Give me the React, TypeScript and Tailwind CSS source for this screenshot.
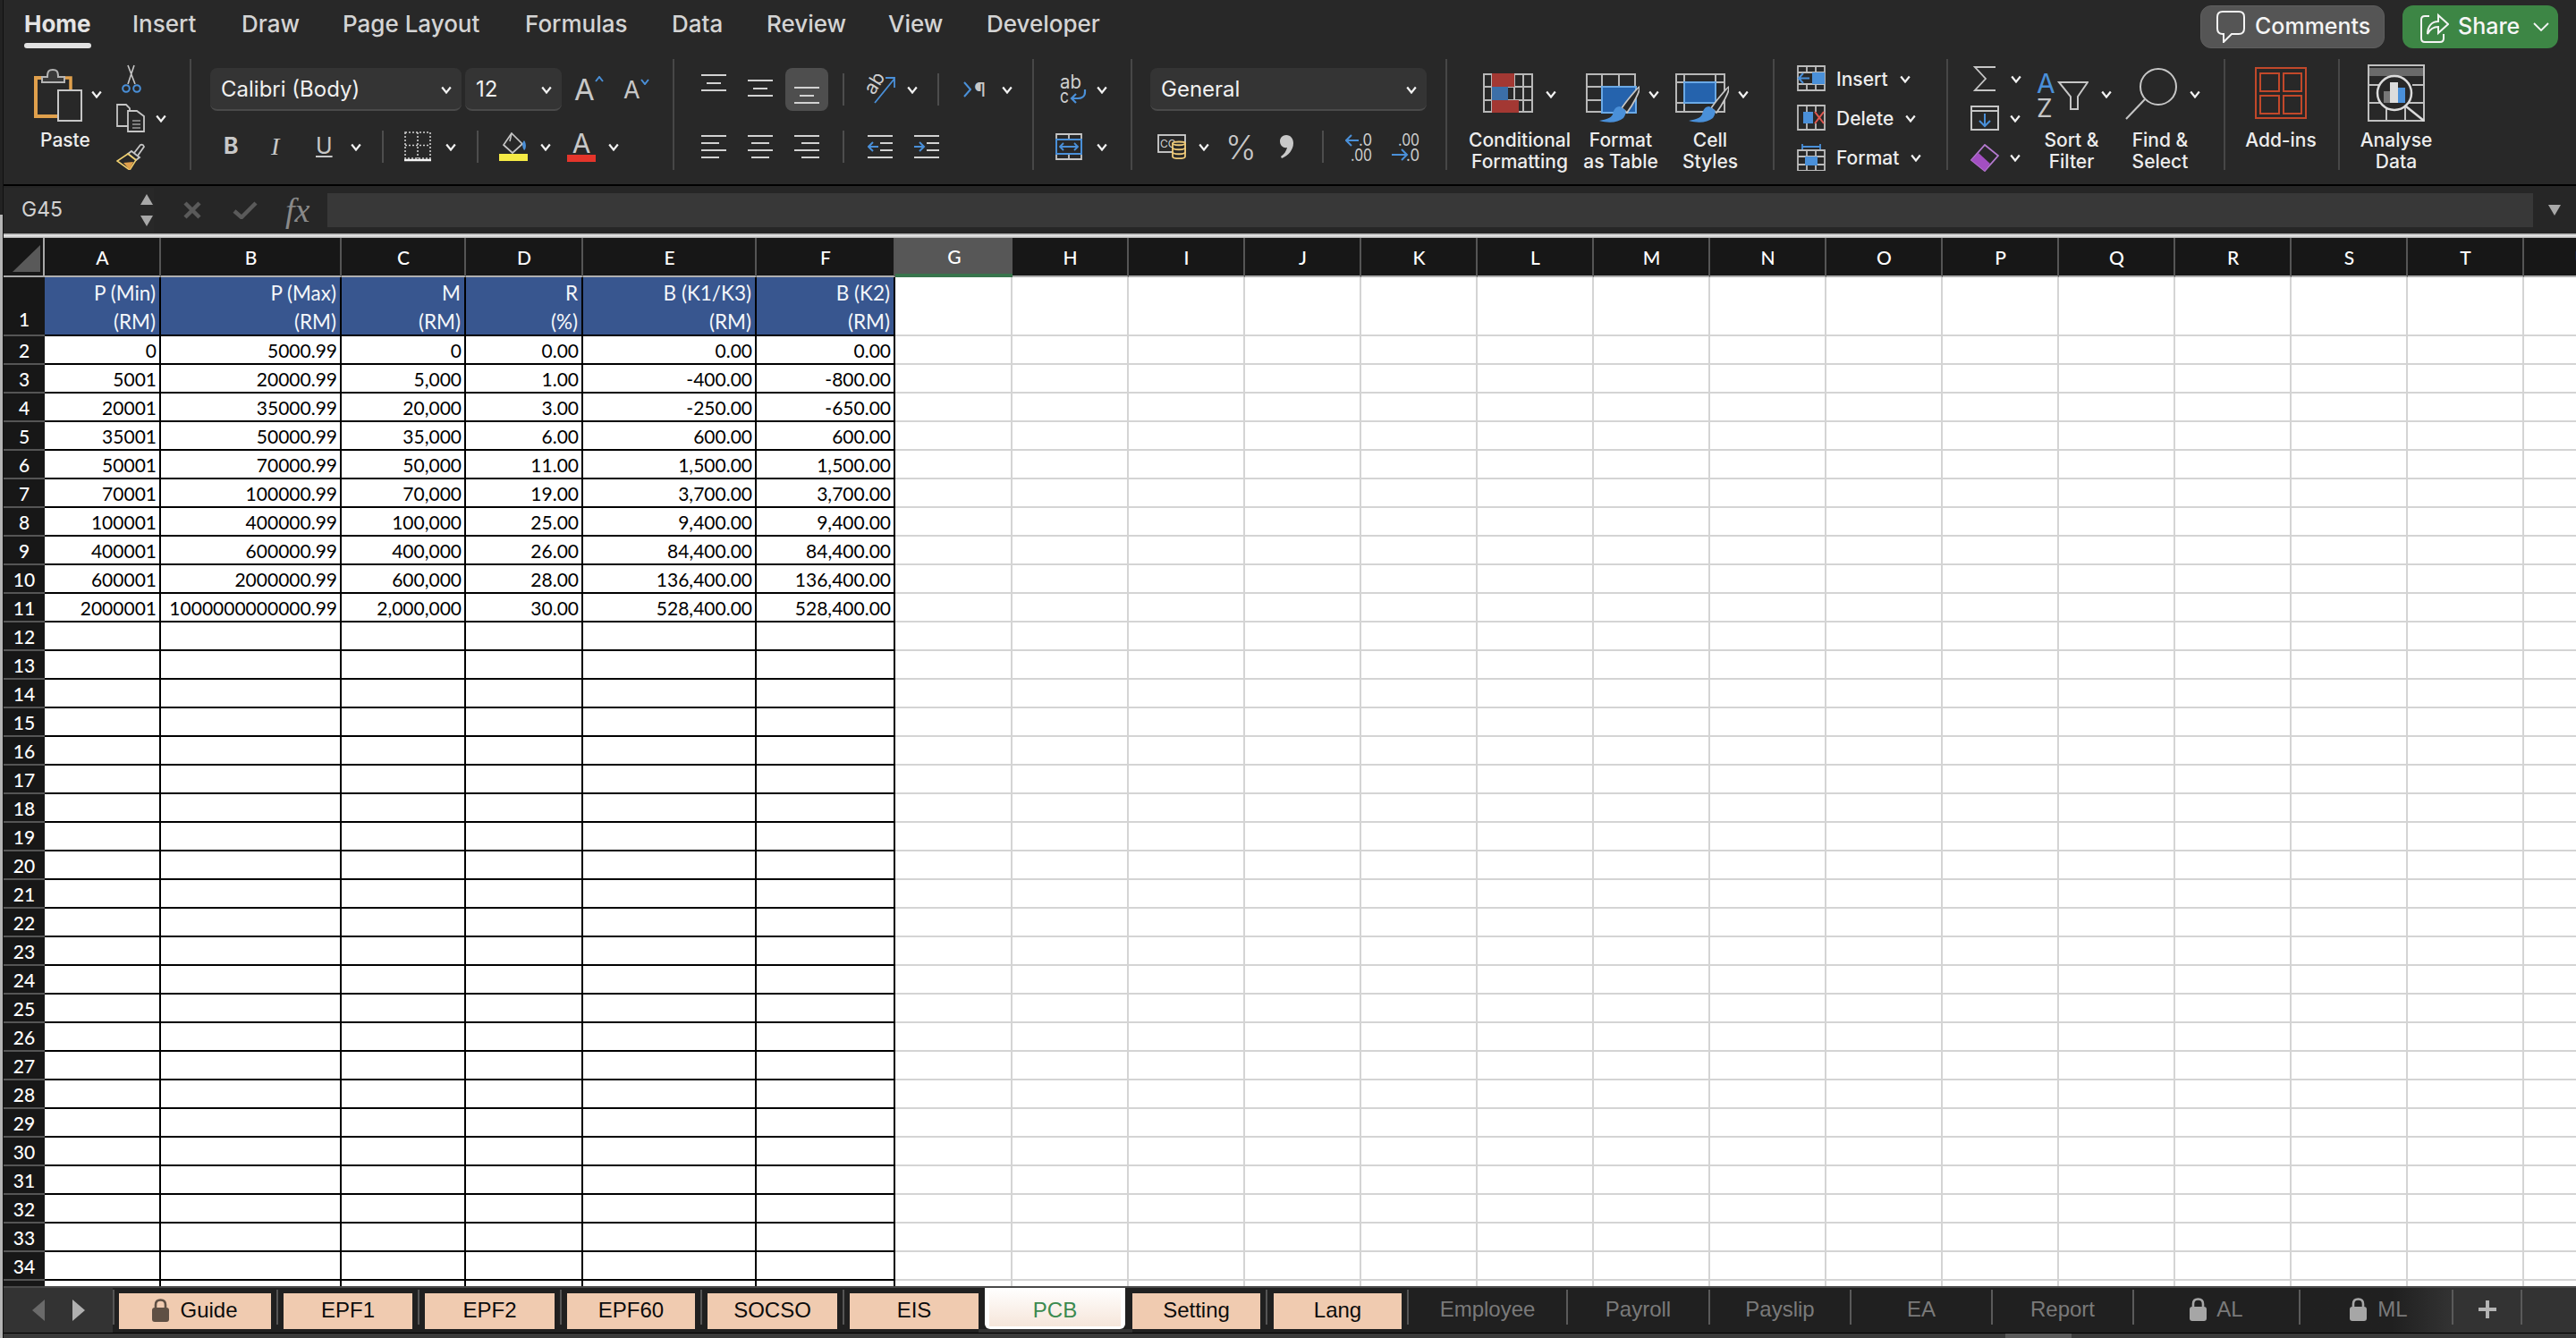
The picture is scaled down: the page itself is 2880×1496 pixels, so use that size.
import React from "react";

const G = "#c6c6c6";
const B = "#4a90d9";

function Chev({ cls = "" }: { cls?: string }) {
  return (
    <svg width="12" height="9" viewBox="0 0 12 9" className={`shrink-0 ${cls}`}>
      <path d="M1.2 1.5 6 7.5 10.8 1.5" fill="none" stroke="#f2f2f2" strokeWidth="2.2" />
    </svg>
  );
}

function Sep({ cls = "" }: { cls?: string }) {
  return <div className={`h-[36px] w-[2px] shrink-0 bg-[#4d4d4d] ${cls}`} />;
}

function ClipboardIcon() {
  return (
    <svg width="54" height="59" viewBox="0 0 54 59" className="shrink-0">
      <path d="M10 10H2V53H26" fill="none" stroke="#e0a04c" strokeWidth="4" />
      <path d="M34 10H41V24" fill="none" stroke="#e0a04c" strokeWidth="3.5" />
      <path d="M9 15V9H15C15 2 17 1 21 1S27 2 27 9H34V15Z" fill="#3a3a3a" stroke="#b4b4b4" strokeWidth="2" />
      <rect x="27" y="24" width="26" height="34" fill="#282828" stroke={G} strokeWidth="2" />
    </svg>
  );
}

function ScissorsIcon() {
  return (
    <svg width="22" height="33" viewBox="0 0 22 33" className="ml-[6px] mt-[6px] block">
      <path d="M14 1 7 22M7 1 15 22" stroke={G} strokeWidth="1.6" fill="none" />
      <circle cx="5" cy="27" r="3.8" fill="none" stroke={B} strokeWidth="2" />
      <circle cx="17" cy="27" r="3.8" fill="none" stroke={B} strokeWidth="2" />
    </svg>
  );
}

function CopyIcon() {
  return (
    <svg width="32" height="32" viewBox="0 0 32 32" className="shrink-0">
      <path d="M13 25H1V1H11L15 5V8" fill="none" stroke={G} strokeWidth="1.8" />
      <path d="M13 8H23L31 14V31H13Z" fill="#282828" stroke={G} strokeWidth="1.8" />
      <path d="M18 19H27M18 23H27M18 27H27" stroke="#9a9a9a" strokeWidth="1.5" />
    </svg>
  );
}

function PainterIcon() {
  return (
    <svg width="32" height="30" viewBox="0 0 32 30" className="block">
      <path d="M20 11 27 2Q30 1 31 4L24 14" fill="none" stroke={G} strokeWidth="1.8" />
      <path d="M17 9 26 16 22 19 13 12Z" fill="#282828" stroke={G} strokeWidth="1.8" />
      <path d="M13 12 22 19 15 30 1 20Z" fill="#282828" stroke="#f0d070" strokeWidth="1.6" />
      <path d="M8 22 19 21 15 30Z" fill="#e0a04c" />
    </svg>
  );
}

function BordersIcon() {
  return (
    <svg width="30" height="34" viewBox="0 0 30 34" className="shrink-0">
      <path d="M1 1H29V30H1ZM15 1V30M1 15.5H29" fill="none" stroke="#cfcfcf" strokeWidth="1.6" strokeDasharray="2 2" />
      <path d="M0 32H30" stroke="#f4f4f4" strokeWidth="2.5" />
    </svg>
  );
}

function FillIcon() {
  return (
    <svg width="32" height="32" viewBox="0 0 32 32" className="shrink-0">
      <path d="M14 1 26 13 15 23 5 14Z" fill="none" stroke={G} strokeWidth="1.7" />
      <path d="M14 1 12 10" stroke={G} strokeWidth="1.5" />
      <path d="M28 9C31 13 30 19 28 20 26 17 25 12 28 9Z" fill={B} />
      <rect x="0" y="24" width="32" height="8" fill="#f5ea45" />
    </svg>
  );
}

function AlignV({ pos }: { pos: "top" | "mid" | "bot" }) {
  const y = pos === "top" ? [8, 17, 25] : pos === "mid" ? [14, 23, 31] : [22, 31, 39];
  return (
    <svg width="28" height="48" viewBox="0 0 28 48" className="block shrink-0">
      <path d={`M0 ${y[0]}H28M6 ${y[1]}H22M0 ${y[2]}H28`} stroke="#d2d2d2" strokeWidth="2" />
    </svg>
  );
}

function AlignH({ pos }: { pos: "l" | "c" | "r" }) {
  const d =
    pos === "l"
      ? "M0 6H28M0 14H20M0 22H28M0 30H20"
      : pos === "c"
        ? "M0 6H28M4 14H24M0 22H28M4 30H24"
        : "M0 6H28M8 14H28M0 22H28M8 30H28";
  return (
    <svg width="28" height="36" viewBox="0 0 28 36" className="block shrink-0">
      <path d={d} stroke="#d2d2d2" strokeWidth="2" />
    </svg>
  );
}

function IndentIcon({ inward }: { inward: boolean }) {
  return (
    <svg width="28" height="36" viewBox="0 0 28 36" className="block shrink-0">
      <path d="M0 6H28M14 14H28M14 22H28M0 30H28" stroke="#d2d2d2" strokeWidth="2" />
      {inward ? (
        <path d="M0 18H11M6 13 11 18 6 23" fill="none" stroke={B} strokeWidth="2" />
      ) : (
        <path d="M1 18H12M6 13 1 18 6 23" fill="none" stroke={B} strokeWidth="2" />
      )}
    </svg>
  );
}

function OrientIcon() {
  return (
    <svg width="34" height="34" viewBox="0 0 34 34" className="shrink-0">
      <text transform="translate(10 24) rotate(-58)" fontFamily="Inter, sans-serif" fontSize="21" fill="#cfcfcf">
        ab
      </text>
      <path d="M11 32 33 5M23 4H33V15" fill="none" stroke={B} strokeWidth="1.8" />
    </svg>
  );
}

function WrapIcon() {
  return (
    <svg width="30" height="34" viewBox="0 0 30 34" className="shrink-0">
      <text x="0" y="16" fontFamily="Inter, sans-serif" fontSize="21" fill="#cfcfcf" textLength="24" lengthAdjust="spacingAndGlyphs">
        ab
      </text>
      <text x="0" y="32" fontFamily="Inter, sans-serif" fontSize="21" fill="#cfcfcf" textLength="10" lengthAdjust="spacingAndGlyphs">
        c
      </text>
      <path d="M28 17V20C28 25 24 27 20 27H13M18 22 13 27 18 32" fill="none" stroke={B} strokeWidth="2.2" />
    </svg>
  );
}

function MergeIcon() {
  return (
    <svg width="30" height="30" viewBox="0 0 30 30" className="shrink-0">
      <path d="M1 1H29V29H1ZM15 1V7M15 23V29" fill="none" stroke={G} strokeWidth="1.8" />
      <rect x="1" y="7" width="28" height="16" fill="none" stroke={B} strokeWidth="2" />
      <path d="M5 15H25M9 11 5 15 9 19M21 11 25 15 21 19" fill="none" stroke={B} strokeWidth="1.8" />
    </svg>
  );
}

function CurrencyIcon() {
  return (
    <svg width="32" height="28" viewBox="0 0 32 28" className="shrink-0">
      <rect x="1" y="1" width="30" height="19" fill="none" stroke="#d0d0d0" strokeWidth="1.8" />
      <text x="3" y="15" fontFamily="Inter, sans-serif" fontSize="12" fill="#d0d0d0">
        CC
      </text>
      <path d="M17 10C17 8 31 8 31 10V25C31 28 17 28 17 25Z" fill="#282828" stroke="#eec978" strokeWidth="1.8" />
      <path d="M17 10C17 13 31 13 31 10M17 15C17 18 31 18 31 15M17 20C17 23 31 23 31 20" fill="none" stroke="#eec978" strokeWidth="1.8" />
    </svg>
  );
}

function CommaIcon() {
  return (
    <svg width="15" height="26" viewBox="0 0 15 26" className="shrink-0">
      <path d="M7 0C12 0 15 4 15 9 15 17 9 23 2 26L1 24C5 21 7 18 8 14 3 15 0 11 0 7 0 3 3 0 7 0Z" fill="#c8c8c8" />
    </svg>
  );
}

function DecimalInc() {
  return (
    <svg width="32" height="34" viewBox="0 0 32 34" className="shrink-0">
      <text x="15" y="16" fontFamily="Inter, sans-serif" fontSize="18" fill="#cfcfcf" textLength="15" lengthAdjust="spacingAndGlyphs">
        .0
      </text>
      <text x="6" y="33" fontFamily="Inter, sans-serif" fontSize="18" fill="#cfcfcf" textLength="24" lengthAdjust="spacingAndGlyphs">
        .00
      </text>
      <path d="M15 10H1M7 4 1 10 7 16" fill="none" stroke={B} strokeWidth="2" />
    </svg>
  );
}

function DecimalDec() {
  return (
    <svg width="32" height="34" viewBox="0 0 32 34" className="shrink-0">
      <text x="7" y="16" fontFamily="Inter, sans-serif" fontSize="18" fill="#cfcfcf" textLength="24" lengthAdjust="spacingAndGlyphs">
        .00
      </text>
      <text x="16" y="33" fontFamily="Inter, sans-serif" fontSize="18" fill="#cfcfcf" textLength="15" lengthAdjust="spacingAndGlyphs">
        .0
      </text>
      <path d="M0 26H17M11 20 17 26 11 32" fill="none" stroke={B} strokeWidth="2" />
    </svg>
  );
}

function Brush() {
  return (
    <g>
      <path d="M60 15C58 16 46 30 40 39L46 44C52 36 61 20 60 15Z" fill="#282828" stroke={G} strokeWidth="1.8" />
      <path d="M38 37C33 37 31 41 30 46 28 50 24 51 15 53 26 56 36 55 42 50 45 46 45 42 44 41Z" fill={B} />
    </g>
  );
}

function CondIcon() {
  return (
    <svg width="56" height="44" viewBox="0 0 56 44" className="shrink-0">
      <path d="M1 1H55V43H1ZM10 1V43M35 1V43M45 1V43M1 15H55M1 30H55" fill="none" stroke="#b8b8b8" strokeWidth="2" />
      <rect x="10" y="0" width="25" height="15" fill="#a33833" />
      <rect x="10" y="15" width="18" height="15" fill="#3c6fa8" />
      <rect x="10" y="30" width="30" height="14" fill="#a33833" />
    </svg>
  );
}

function TableIcon() {
  return (
    <svg width="60" height="56" viewBox="0 0 60 56" className="shrink-0">
      <path d="M1 1H55V43H1ZM18 1V43M37 1V43M1 15H55M1 30H55" fill="none" stroke="#b8b8b8" strokeWidth="2" />
      <rect x="18" y="15" width="38" height="29" fill="#2563ad" stroke="#6aa9e6" strokeWidth="2" />
      <Brush />
    </svg>
  );
}

function StylesIcon() {
  return (
    <svg width="60" height="56" viewBox="0 0 60 56" className="shrink-0">
      <path d="M1 1H55V43H1ZM10 1V43M45 1V43M1 10H55M1 33H55" fill="none" stroke="#b8b8b8" strokeWidth="2" />
      <rect x="10" y="10" width="35" height="23" fill="#2563ad" stroke="#6aa9e6" strokeWidth="2" />
      <Brush />
    </svg>
  );
}

function CellOpIcon({ kind }: { kind: "ins" | "del" | "fmt" }) {
  return (
    <svg width="32" height="30" viewBox="0 0 32 30" className="shrink-0">
      {kind === "ins" && (
        <>
          <path d="M1 1H31V28H1ZM11 1V8M21 1V8M11 21V28M21 21V28M1 8H31M1 21H31" fill="none" stroke="#bcbcbc" strokeWidth="1.8" />
          <rect x="17" y="8" width="14" height="13" fill={B} />
          <path d="M14 14.5H2M7 9 2 14.5 7 20" fill="none" stroke={B} strokeWidth="2" />
        </>
      )}
      {kind === "del" && (
        <>
          <path d="M1 1H31V28H1ZM11 1V8M21 1V8M11 21V28M21 21V28M1 1H10M1 28H10" fill="none" stroke="#bcbcbc" strokeWidth="1.8" />
          <rect x="7" y="8" width="11" height="13" fill={B} />
          <path d="M20 8 30 21M30 8 20 21" stroke="#e0574f" strokeWidth="2" />
        </>
      )}
      {kind === "fmt" && (
        <>
          <path d="M1 7H31V30H1ZM11 7V30M21 7V30M1 14H31M1 23H31" fill="none" stroke="#bcbcbc" strokeWidth="1.8" />
          <rect x="9" y="14" width="14" height="10" fill={B} />
          <path d="M6 3H26M6 0V6M26 0V6" fill="none" stroke={B} strokeWidth="1.8" />
        </>
      )}
    </svg>
  );
}

function SigmaIcon() {
  return (
    <svg width="26" height="28" viewBox="0 0 26 28" className="shrink-0">
      <path d="M25 1H2L14 14 2 27H25" fill="none" stroke={G} strokeWidth="1.8" />
    </svg>
  );
}

function FillDownIcon() {
  return (
    <svg width="32" height="28" viewBox="0 0 32 28" className="shrink-0">
      <path d="M1 1H31V27H1ZM1 6H31" fill="none" stroke={G} strokeWidth="2" />
      <path d="M16 9V23M10 17 16 23 22 17" fill="none" stroke={B} strokeWidth="2" />
    </svg>
  );
}

function EraserIcon() {
  return (
    <svg width="32" height="31" viewBox="0 0 32 31" className="shrink-0">
      <path d="M16 1 31 13 16 30 1 18Z" fill="#282828" stroke="#b57ad0" strokeWidth="1.8" />
      <path d="M1 18 9 10 22 22 16 30Z" fill="#a34fc2" />
    </svg>
  );
}

function SortIcon() {
  return (
    <svg width="58" height="54" viewBox="0 0 58 54" className="shrink-0">
      <text x="0" y="26" fontFamily="Inter, sans-serif" fontSize="30" fill={B}>
        A
      </text>
      <text x="0" y="53" fontFamily="Inter, sans-serif" fontSize="28" fill={G}>
        Z
      </text>
      <path d="M25 14H57L46 30V44H38V30Z" fill="none" stroke={G} strokeWidth="2" />
    </svg>
  );
}

function FindIcon() {
  return (
    <svg width="58" height="58" viewBox="0 0 58 58" className="shrink-0">
      <circle cx="37" cy="21" r="20" fill="none" stroke={G} strokeWidth="2" />
      <path d="M22 35 1 57" stroke={G} strokeWidth="2" />
    </svg>
  );
}

function AddinsIcon() {
  return (
    <svg width="58" height="58" viewBox="0 0 58 58" className="shrink-0">
      <rect x="1" y="1" width="56" height="56" fill="none" stroke="#c2482a" strokeWidth="2" />
      <path d="M6 7H27V27H6ZM32 7H52V27H32ZM6 32H27V52H6ZM32 32H52V52H32Z" fill="none" stroke="#c2482a" strokeWidth="2" />
    </svg>
  );
}

function AnalyseIcon() {
  return (
    <svg width="64" height="64" viewBox="0 0 64 64" className="shrink-0">
      <path d="M1 1H63V63H1ZM1 43H63M21 43V63M42 43V63M1 23H14M50 23H63" fill="none" stroke="#c0c0c0" strokeWidth="2" />
      <rect x="2" y="4" width="60" height="9" fill="#6a6a6a" />
      <circle cx="30" cy="32" r="19" fill="#282828" stroke="#dcdcdc" strokeWidth="2.5" />
      <rect x="18" y="30" width="7" height="13" fill="#777" />
      <rect x="25" y="20" width="9" height="23" fill="#dcdcdc" />
      <rect x="34" y="26" width="8" height="17" fill={B} />
      <path d="M43 47 63 63" stroke="#dcdcdc" strokeWidth="2.5" />
    </svg>
  );
}

function CommentIcon() {
  return (
    <svg width="32" height="36" viewBox="0 0 32 36" className="shrink-0">
      <path d="M7 1H25Q31 1 31 7V20Q31 26 25 26H17L8 35V26H7Q1 26 1 20V7Q1 1 7 1Z" fill="none" stroke="#f4f4f4" strokeWidth="2" />
    </svg>
  );
}

function ShareIcon() {
  return (
    <svg width="32" height="36" viewBox="0 0 32 36" className="shrink-0">
      <path d="M10 6H5Q1 6 1 10V31Q1 35 5 35H22Q26 35 26 31V26" fill="none" stroke="#f4f4f4" strokeWidth="2" />
      <path d="M8 26C8 17 13 12 20 12V5L31 15 20 25V18C15 18 11 20 8 26Z" fill="none" stroke="#f4f4f4" strokeWidth="2" />
    </svg>
  );
}

function Lock({ color }: { color: string }) {
  return (
    <svg width="19" height="26" viewBox="0 0 19 26" className="shrink-0">
      <path d="M4 11V7C4 3 6 1.5 9.5 1.5S15 3 15 7V11" fill="none" stroke={color} strokeWidth="2.6" />
      <rect x="0" y="10" width="19" height="16" rx="3" fill={color} />
    </svg>
  );
}

function Label({ children }: { children: React.ReactNode }) {
  return <div className="text-center text-[21px] font-medium leading-[24px] text-[#ededed]">{children}</div>;
}

function Group({ cls, children }: { cls: string; children: React.ReactNode }) {
  return <div className={`h-[124px] shrink-0 border-r-2 border-[#474747] ${cls}`}>{children}</div>;
}

const menu = [
  { t: "Home", w: "w-[121px]" },
  { t: "Insert", w: "w-[122px]" },
  { t: "Draw", w: "w-[113px]" },
  { t: "Page Layout", w: "w-[204px]" },
  { t: "Formulas", w: "w-[164px]" },
  { t: "Data", w: "w-[106px]" },
  { t: "Review", w: "w-[136px]" },
  { t: "View", w: "w-[110px]" },
  { t: "Developer", w: "w-[160px]" },
];

function TopTabs() {
  return (
    <div className="flex h-[66px] items-start pl-[23px]">
      {menu.map((m, i) => (
        <div key={m.t} className={`${m.w} flex flex-col items-start pt-[11px]`}>
          <div className={`flex flex-col items-stretch text-[26px] leading-[32px] ${i === 0 ? "font-bold text-[#e4e4e4]" : "font-medium text-[#d4d4d4]"}`}>
            <span>{m.t}</span>
            {i === 0 && <span className="mt-[5px] h-[6px] rounded-full bg-[#e2e2e2]" />}
          </div>
        </div>
      ))}
      <div className="ml-auto mr-[20px] mt-[6px] flex gap-[20px]">
        <div className="flex h-[48px] w-[206px] items-center gap-[11px] rounded-[12px] border border-[#5e5e5e] bg-[#555555] pl-[17px] text-[25px] font-medium text-[#f4f4f4]">
          <CommentIcon />
          <span>Comments</span>
        </div>
        <div className="flex h-[48px] w-[174px] items-center gap-[10px] rounded-[12px] bg-[#3d8645] pl-[20px] text-[25px] font-medium text-[#f6f6f6]">
          <ShareIcon />
          <span>Share</span>
          <svg width="18" height="10" viewBox="0 0 18 10" className="ml-[5px] shrink-0">
            <path d="M1 1 9 9 17 1" fill="none" stroke="#f4f4f4" strokeWidth="1.8" />
          </svg>
        </div>
      </div>
    </div>
  );
}

function Ribbon() {
  return (
    <div className="flex items-start">
      {/* Clipboard */}
      <Group cls="flex w-[210px]">
        <div className="ml-[34px] w-[92px] pt-[11px]">
          <div className="flex items-start">
            <ClipboardIcon />
            <Chev cls="ml-[10px] mt-[24px]" />
          </div>
          <div className="ml-[7px] mt-[9px] text-[21px] font-medium leading-[24px] text-[#ededed]">Paste</div>
        </div>
        <div className="flex flex-col">
          <ScissorsIcon />
          <div className="mt-[11px] flex items-center">
            <CopyIcon />
            <Chev cls="ml-[12px]" />
          </div>
          <div className="mt-[12px]">
            <PainterIcon />
          </div>
        </div>
      </Group>

      {/* Font */}
      <Group cls="w-[540px] pt-[10px]">
        <div className="flex items-center">
          <div className="ml-[21px] flex h-[48px] w-[281px] items-center justify-between rounded-[8px] border-b-2 border-[#4a4a4a] bg-[#343434] pl-[12px] pr-[11px] pt-[2px] text-[24px] text-[#f0f0f0]">
            <span>Calibri (Body)</span>
            <Chev />
          </div>
          <div className="ml-[4px] flex h-[48px] w-[108px] items-center justify-between rounded-[8px] border-b-2 border-[#4a4a4a] bg-[#343434] pl-[12px] pr-[11px] pt-[2px] text-[24px] text-[#f0f0f0]">
            <span>12</span>
            <Chev />
          </div>
          <div className="ml-[14px] flex w-[33px] shrink-0 items-start">
            <span className="mt-[-1px] text-[33px] leading-[40px] text-[#c8c8c8]">A</span>
            <svg width="10" height="7" viewBox="0 0 10 7" className="mt-[4px] shrink-0">
              <path d="M1 6 5 1 9 6" fill="none" stroke={B} strokeWidth="2" />
            </svg>
          </div>
          <div className="ml-[22px] flex w-[28px] shrink-0 items-start">
            <span className="mt-[1px] text-[27px] leading-[36px] text-[#c8c8c8]">A</span>
            <svg width="10" height="7" viewBox="0 0 10 7" className="mt-[6px] shrink-0">
              <path d="M1 1 5 6 9 1" fill="none" stroke={B} strokeWidth="2" />
            </svg>
          </div>
        </div>
        <div className="mt-[22px] flex h-[36px] items-center">
          <span className="ml-[36px] w-[17px] text-[25px] font-bold text-[#c8c8c8]">B</span>
          <span className="ml-[36px] w-[15px] font-['Liberation_Serif',serif] text-[28px] italic text-[#c8c8c8]">I</span>
          <span className="ml-[35px] w-[17px] text-[25px] text-[#c8c8c8] underline">U</span>
          <Chev cls="ml-[22px]" />
          <Sep cls="ml-[23px]" />
          <div className="ml-[23px]">
            <BordersIcon />
          </div>
          <Chev cls="ml-[16px]" />
          <Sep cls="ml-[23px]" />
          <div className="ml-[23px]">
            <FillIcon />
          </div>
          <Chev cls="ml-[14px]" />
          <div className="ml-[18px] flex w-[32px] flex-col items-center">
            <span className="text-[30px] leading-[25px] text-[#c8c8c8]">A</span>
            <span className="h-[8px] w-[32px] bg-[#e5352b]" />
          </div>
          <Chev cls="ml-[14px]" />
        </div>
      </Group>

      {/* Alignment */}
      <Group cls="w-[402px] pt-[10px]">
        <div className="flex h-[48px] items-center">
          <div className="ml-[30px]">
            <AlignV pos="top" />
          </div>
          <div className="ml-[24px]">
            <AlignV pos="mid" />
          </div>
          <div className="ml-[14px] flex h-[48px] w-[48px] justify-center rounded-[8px] bg-[#4e4e4e]">
            <AlignV pos="bot" />
          </div>
          <Sep cls="ml-[16px]" />
          <div className="ml-[23px]">
            <OrientIcon />
          </div>
          <Chev cls="ml-[13px]" />
          <Sep cls="ml-[22px]" />
          <div className="ml-[27px] flex w-[28px] shrink-0 items-center gap-[3px] text-[22px] leading-none text-[#c8c8c8]">
            <svg width="9" height="18" viewBox="0 0 9 18" className="shrink-0">
              <path d="M1 1 8 9 1 17" fill="none" stroke={B} strokeWidth="2" />
            </svg>
            <span>¶</span>
          </div>
          <Chev cls="ml-[15px]" />
        </div>
        <div className="mt-[22px] flex h-[36px] items-center">
          <div className="ml-[30px]">
            <AlignH pos="l" />
          </div>
          <div className="ml-[24px]">
            <AlignH pos="c" />
          </div>
          <div className="ml-[24px]">
            <AlignH pos="r" />
          </div>
          <Sep cls="ml-[26px]" />
          <div className="ml-[26px]">
            <IndentIcon inward={false} />
          </div>
          <div className="ml-[24px]">
            <IndentIcon inward={true} />
          </div>
        </div>
      </Group>

      {/* Wrap */}
      <Group cls="w-[110px] pt-[10px]">
        <div className="flex h-[48px] items-center">
          <div className="ml-[29px]">
            <WrapIcon />
          </div>
          <Chev cls="ml-[11px]" />
        </div>
        <div className="mt-[22px] flex h-[36px] items-center">
          <div className="ml-[24px]">
            <MergeIcon />
          </div>
          <Chev cls="ml-[16px]" />
        </div>
      </Group>

      {/* Number */}
      <Group cls="w-[352px] pt-[10px]">
        <div className="ml-[20px] flex h-[48px] w-[309px] items-center justify-between rounded-[8px] border-b-2 border-[#4a4a4a] bg-[#343434] pl-[12px] pr-[11px] pt-[2px] text-[24px] text-[#f0f0f0]">
          <span>General</span>
          <Chev />
        </div>
        <div className="mt-[22px] flex h-[36px] items-center">
          <div className="ml-[28px]">
            <CurrencyIcon />
          </div>
          <Chev cls="ml-[14px]" />
          <span className="ml-[18px] w-[39px] text-[37px] font-light leading-none text-[#c8c8c8]">%</span>
          <div className="ml-[22px]">
            <CommaIcon />
          </div>
          <Sep cls="ml-[32px]" />
          <div className="ml-[24px]">
            <DecimalInc />
          </div>
          <div className="ml-[20px]">
            <DecimalDec />
          </div>
        </div>
      </Group>

      {/* Styles */}
      <Group cls="flex w-[366px] pl-[22px]">
        <div className="w-[118px]">
          <div className="flex h-[79px] items-start pl-[18px] pt-[16px]">
            <CondIcon />
            <Chev cls="ml-[14px] mt-[19px]" />
          </div>
          <Label>
            Conditional
            <br />
            Formatting
          </Label>
        </div>
        <div className="w-[108px]">
          <div className="flex h-[79px] items-start pl-[15px] pt-[16px]">
            <TableIcon />
            <Chev cls="ml-[10px] mt-[19px]" />
          </div>
          <Label>
            Format
            <br />
            as Table
          </Label>
        </div>
        <div className="w-[92px]">
          <div className="flex h-[79px] items-start pl-[7px] pt-[16px]">
            <StylesIcon />
            <Chev cls="ml-[10px] mt-[19px]" />
          </div>
          <Label>
            Cell
            <br />
            Styles
          </Label>
        </div>
      </Group>

      {/* Cells */}
      <Group cls="w-[194px]">
        {[
          { k: "ins" as const, t: "Insert" },
          { k: "del" as const, t: "Delete" },
          { k: "fmt" as const, t: "Format" },
        ].map((r) => (
          <div key={r.t} className="flex h-[44px] items-center pl-[25px]">
            <CellOpIcon kind={r.k} />
            <span className="ml-[12px] mt-[1px] text-[21px] font-medium text-[#ededed]">{r.t}</span>
            <Chev cls="ml-[13px]" />
          </div>
        ))}
      </Group>

      {/* Editing */}
      <Group cls="flex w-[310px]">
        <div className="w-[84px]">
          <div className="flex h-[44px] items-center pl-[28px]">
            <SigmaIcon />
            <Chev cls="ml-[16px]" />
          </div>
          <div className="flex h-[44px] items-center pl-[25px]">
            <FillDownIcon />
            <Chev cls="ml-[12px]" />
          </div>
          <div className="flex h-[44px] items-center pl-[25px]">
            <EraserIcon />
            <Chev cls="ml-[12px]" />
          </div>
        </div>
        <div className="w-[108px]">
          <div className="flex h-[79px] items-start pl-[15px] pt-[12px]">
            <SortIcon />
            <Chev cls="ml-[14px] mt-[23px]" />
          </div>
          <Label>
            Sort &amp;
            <br />
            Filter
          </Label>
        </div>
        <div className="w-[90px]">
          <div className="flex h-[79px] items-start pl-[6px] pt-[10px]">
            <FindIcon />
            <Chev cls="ml-[14px] mt-[25px]" />
          </div>
          <Label>
            Find &amp;
            <br />
            Select
          </Label>
        </div>
      </Group>

      {/* Add-ins */}
      <Group cls="w-[128px]">
        <div className="w-[124px]">
          <div className="flex h-[79px] justify-center pt-[9px]">
            <AddinsIcon />
          </div>
          <Label>Add-ins</Label>
        </div>
      </Group>

      {/* Analyse */}
      <div className="w-[126px]">
        <div className="flex h-[79px] justify-center pt-[6px]">
          <AnalyseIcon />
        </div>
        <Label>
          Analyse
          <br />
          Data
        </Label>
      </div>
    </div>
  );
}

function FormulaBar() {
  return (
    <div className="flex h-[53px] items-center bg-[#262626]">
      <div className="flex h-[50px] w-[168px] shrink-0 items-center justify-between bg-[#282828] pl-[20px] pr-[1px] text-[23px] text-[#d2d2d2]">
        <span>G45</span>
        <svg width="14" height="36" viewBox="0 0 14 36">
          <path d="M7 0 14 12H0ZM0 24H14L7 36Z" fill="#a8a8a8" />
        </svg>
      </div>
      <div className="ml-[33px] flex items-center">
        <svg width="20" height="20" viewBox="0 0 20 20" className="shrink-0">
          <path d="M2 2 18 18M18 2 2 18" stroke="#5a5a5a" strokeWidth="4.5" />
        </svg>
        <svg width="28" height="20" viewBox="0 0 28 20" className="ml-[35px] shrink-0">
          <path d="M2 11 10 18 26 2" fill="none" stroke="#5a5a5a" strokeWidth="4.5" />
        </svg>
        <span className="ml-[31px] w-[47px] font-['Liberation_Serif',serif] text-[38px] italic leading-none text-[#8a8a8a]">fx</span>
      </div>
      <div className="h-[38px] w-[2466px] shrink-0 bg-[#383838]" />
      <svg width="14" height="12" viewBox="0 0 14 12" className="ml-[17px] shrink-0">
        <path d="M0 0H14L7 12Z" fill="#a8a8a8" />
      </svg>
    </div>
  );
}

const colW = [
  "w-[130px]", "w-[202px]", "w-[139px]", "w-[131px]", "w-[194px]", "w-[155px]", "w-[131px]",
  "w-[130px]", "w-[130px]", "w-[130px]", "w-[130px]", "w-[130px]", "w-[130px]", "w-[130px]",
  "w-[130px]", "w-[130px]", "w-[130px]", "w-[130px]", "w-[130px]", "w-[130px]", "w-[130px]",
];
const colL = "ABCDEFGHIJKLMNOPQRSTU".split("");

const head = [
  ["P (Min)", "(RM)"],
  ["P (Max)", "(RM)"],
  ["M", "(RM)"],
  ["R", "(%)"],
  ["B (K1/K3)", "(RM)"],
  ["B (K2)", "(RM)"],
];

const data = [
  ["0", "5000.99", "0", "0.00", "0.00", "0.00"],
  ["5001", "20000.99", "5,000", "1.00", "-400.00", "-800.00"],
  ["20001", "35000.99", "20,000", "3.00", "-250.00", "-650.00"],
  ["35001", "50000.99", "35,000", "6.00", "600.00", "600.00"],
  ["50001", "70000.99", "50,000", "11.00", "1,500.00", "1,500.00"],
  ["70001", "100000.99", "70,000", "19.00", "3,700.00", "3,700.00"],
  ["100001", "400000.99", "100,000", "25.00", "9,400.00", "9,400.00"],
  ["400001", "600000.99", "400,000", "26.00", "84,400.00", "84,400.00"],
  ["600001", "2000000.99", "600,000", "28.00", "136,400.00", "136,400.00"],
  ["2000001", "1000000000000.99", "2,000,000", "30.00", "528,400.00", "528,400.00"],
];

const rowNums = Array.from({ length: 34 }, (_, i) => i + 2);

function Sheet() {
  return (
    <div className="min-h-0 flex-1 overflow-hidden bg-white font-['Lato',sans-serif]">
      <div className="flex h-[44px] w-[2950px]">
        <div className="flex h-[44px] w-[46px] shrink-0 items-end justify-end border-r-2 border-b-2 border-[#a8a8a8] bg-[#171717] pb-[4px] pr-[3px]">
          <svg width="31" height="30" viewBox="0 0 31 30">
            <path d="M31 0V30H0Z" fill="#595959" />
          </svg>
        </div>
        {colL.map((c, i) => (
          <div
            key={c}
            className={`${colW[i]} flex h-[44px] shrink-0 items-center justify-center pl-[1px] pt-[1px] text-[21px] font-medium text-white ${
              c === "G"
                ? "border-b-4 border-[#38744c] bg-[#575757]"
                : "border-r-2 border-b-2 border-r-[#555555] border-b-[#b0b0b0] bg-[#171717]"
            }`}
          >
            {c}
          </div>
        ))}
      </div>

      <div className="flex h-[66px] w-[2950px]">
        <div className="flex h-[66px] w-[46px] shrink-0 items-end justify-center border-b-2 border-[#555555] bg-[#171717] pb-[1px] text-[21px] font-medium leading-[32px] text-white">1</div>
        {colL.map((c, i) =>
          i < 6 ? (
            <div key={c} className={`${colW[i]} h-[66px] shrink-0 border-r-2 border-b-2 border-black bg-[#38568f] pr-[4px] pt-[2px] text-right text-[22.5px] leading-[32px] text-[#f4f6fa]`}>
              <div>{head[i][0]}</div>
              <div>{head[i][1]}</div>
            </div>
          ) : (
            <div key={c} className={`${colW[i]} h-[66px] shrink-0 border-r-2 border-b-2 border-[#d4d4d4]`} />
          ),
        )}
      </div>

      {rowNums.map((n) => (
        <div key={n} className="flex h-[32px] w-[2950px]">
          <div className="flex h-[32px] w-[46px] shrink-0 items-center justify-center border-b-2 border-[#555555] bg-[#171717] pt-[1px] text-[21px] font-medium text-white">{n}</div>
          {colL.map((c, i) =>
            i < 6 ? (
              <div key={c} className={`${colW[i]} h-[32px] shrink-0 border-r-2 border-b-2 border-black pr-[3px] text-right text-[21px] leading-[32px] text-black`}>
                {n <= 11 ? data[n - 2][i] : ""}
              </div>
            ) : (
              <div key={c} className={`${colW[i]} h-[32px] shrink-0 border-r-2 border-b-2 border-[#d4d4d4]`} />
            ),
          )}
        </div>
      ))}
    </div>
  );
}

function SheetTab({ w, label, lock, kind, inner = "" }: { w: string; label: string; lock?: boolean; kind: "peach" | "grey"; inner?: string }) {
  if (kind === "peach") {
    return (
      <div className={`${w} flex shrink-0 items-start`}>
        <div className={`mt-[6px] h-[40px] flex-1 ${inner} flex items-center justify-center gap-[12px] bg-[#f0cbb0] pb-[2px] text-[24px] text-[#0c0c0c]`}>
          {lock && <Lock color="#5f5044" />}
          <span>{label}</span>
        </div>
        <div className="ml-[6px] mt-[2px] h-[39px] w-[2px] shrink-0 bg-[#555555]" />
      </div>
    );
  }
  return (
    <div className={`${w} flex shrink-0 items-start`}>
      <div className="mt-[4px] flex h-[40px] flex-1 items-center justify-center gap-[11px] text-[24px] text-[#7a7a7a]">
        {lock && <Lock color="#a6a6a6" />}
        <span>{label}</span>
      </div>
      <div className="mt-[2px] h-[39px] w-[2px] shrink-0 bg-[#5a5a5a]" />
    </div>
  );
}

function TabBar() {
  return (
    <div className="flex h-[58px] flex-col font-['Liberation_Sans',sans-serif]">
      <div className="flex h-[52px] items-start border-t-2 border-[#4a4a4a] bg-[#202020]">
        <div className="flex h-[50px] w-[122px] shrink-0 items-center bg-[#333333] pl-[32px]">
          <svg width="14" height="24" viewBox="0 0 14 24" className="shrink-0">
            <path d="M14 0V24L0 12Z" fill="#6a6a6a" />
          </svg>
          <svg width="14" height="24" viewBox="0 0 14 24" className="ml-[31px] shrink-0">
            <path d="M0 0V24L14 12Z" fill="#b0b0b0" />
          </svg>
        </div>
        <div className="mt-[2px] h-[39px] w-[2px] shrink-0 bg-[#555555]" />
        <SheetTab w="w-[183px]" label="Guide" lock kind="peach" inner="ml-[5px]" />
        <SheetTab w="w-[158px]" label="EPF1" kind="peach" inner="ml-[6px]" />
        <SheetTab w="w-[159px]" label="EPF2" kind="peach" inner="ml-[6px]" />
        <SheetTab w="w-[157px]" label="EPF60" kind="peach" inner="ml-[6px]" />
        <SheetTab w="w-[159px]" label="SOCSO" kind="peach" inner="ml-[6px]" />
        <div className="flex w-[150px] shrink-0 items-start">
          <div className="ml-[6px] mt-[6px] flex h-[40px] flex-1 items-center justify-center bg-[#f0cbb0] pb-[2px] text-[24px] text-[#0c0c0c]">EIS</div>
        </div>
        <div className="flex h-[50px] w-[172px] shrink-0 flex-col">
          <div className="ml-[7px] mr-[8px] flex h-[46px] flex-col rounded-b-[6px] bg-white px-[5px] pb-[5px]">
            <div className="flex flex-1 items-center justify-center bg-gradient-to-b from-white to-[#f6e6da] pt-[7px] text-[24px] text-[#3b8a4f]">PCB</div>
          </div>
          <div className="h-[4px] bg-[#333333]" />
        </div>
        <SheetTab w="w-[151px]" label="Setting" kind="peach" inner="" />
        <SheetTab w="w-[158px]" label="Lang" kind="peach" inner="ml-[7px]" />
        <SheetTab w="w-[178px]" label="Employee" kind="grey" />
        <SheetTab w="w-[159px]" label="Payroll" kind="grey" />
        <SheetTab w="w-[158px]" label="Payslip" kind="grey" />
        <SheetTab w="w-[158px]" label="EA" kind="grey" />
        <SheetTab w="w-[158px]" label="Report" kind="grey" />
        <SheetTab w="w-[186px]" label="AL" lock kind="grey" />
        <div className="flex h-[50px] w-[171px] shrink-0 items-start bg-gradient-to-r from-[#202020] from-60% to-[#333333]">
          <div className="mt-[4px] flex h-[40px] flex-1 items-center justify-center gap-[12px] pl-[6px] text-[24px] text-[#7a7a7a]">
            <Lock color="#a6a6a6" />
            <span>ML</span>
          </div>
          <div className="mt-[2px] h-[39px] w-[2px] shrink-0 bg-[#5a5a5a]" />
        </div>
        <div className="flex h-[50px] w-[77px] shrink-0 items-start bg-[#333333]">
          <div className="mt-[4px] flex h-[40px] flex-1 items-center justify-center">
            <svg width="20" height="20" viewBox="0 0 20 20">
              <path d="M10 0V20M0 10H20" stroke="#b4b4b4" strokeWidth="4" />
            </svg>
          </div>
          <div className="mt-[2px] h-[39px] w-[2px] shrink-0 bg-[#5a5a5a]" />
        </div>
        <div className="h-[50px] flex-1 bg-[#333333]" />
      </div>
      <div className="flex h-[6px] border-t border-black bg-[#3a3a3a]">
        <div className="ml-[2238px] h-full w-[74px] bg-[#5a5a5a]" />
      </div>
    </div>
  );
}

export default function App() {
  return (
    <div className="flex h-[1496px] w-[2880px] overflow-hidden bg-[#282828] font-['Inter',sans-serif]">
      <div className="flex w-[4px] shrink-0 flex-col border-r border-[#111111]">
        <div className="h-[240px] bg-[#222222]" />
        <div className="flex-1 bg-[#b5b5b5]" />
      </div>
      <div className="flex w-[2876px] shrink-0 flex-col">
        <div className="h-[206px] shrink-0 bg-[#282828]">
          <TopTabs />
          <Ribbon />
        </div>
        <div className="h-[2px] shrink-0 bg-black" />
        <FormulaBar />
        <div className="h-[5px] shrink-0 bg-gradient-to-b from-[#9a9a9a] via-[#e8e8e8] to-[#b0b0b0]" />
        <Sheet />
        <TabBar />
      </div>
    </div>
  );
}
